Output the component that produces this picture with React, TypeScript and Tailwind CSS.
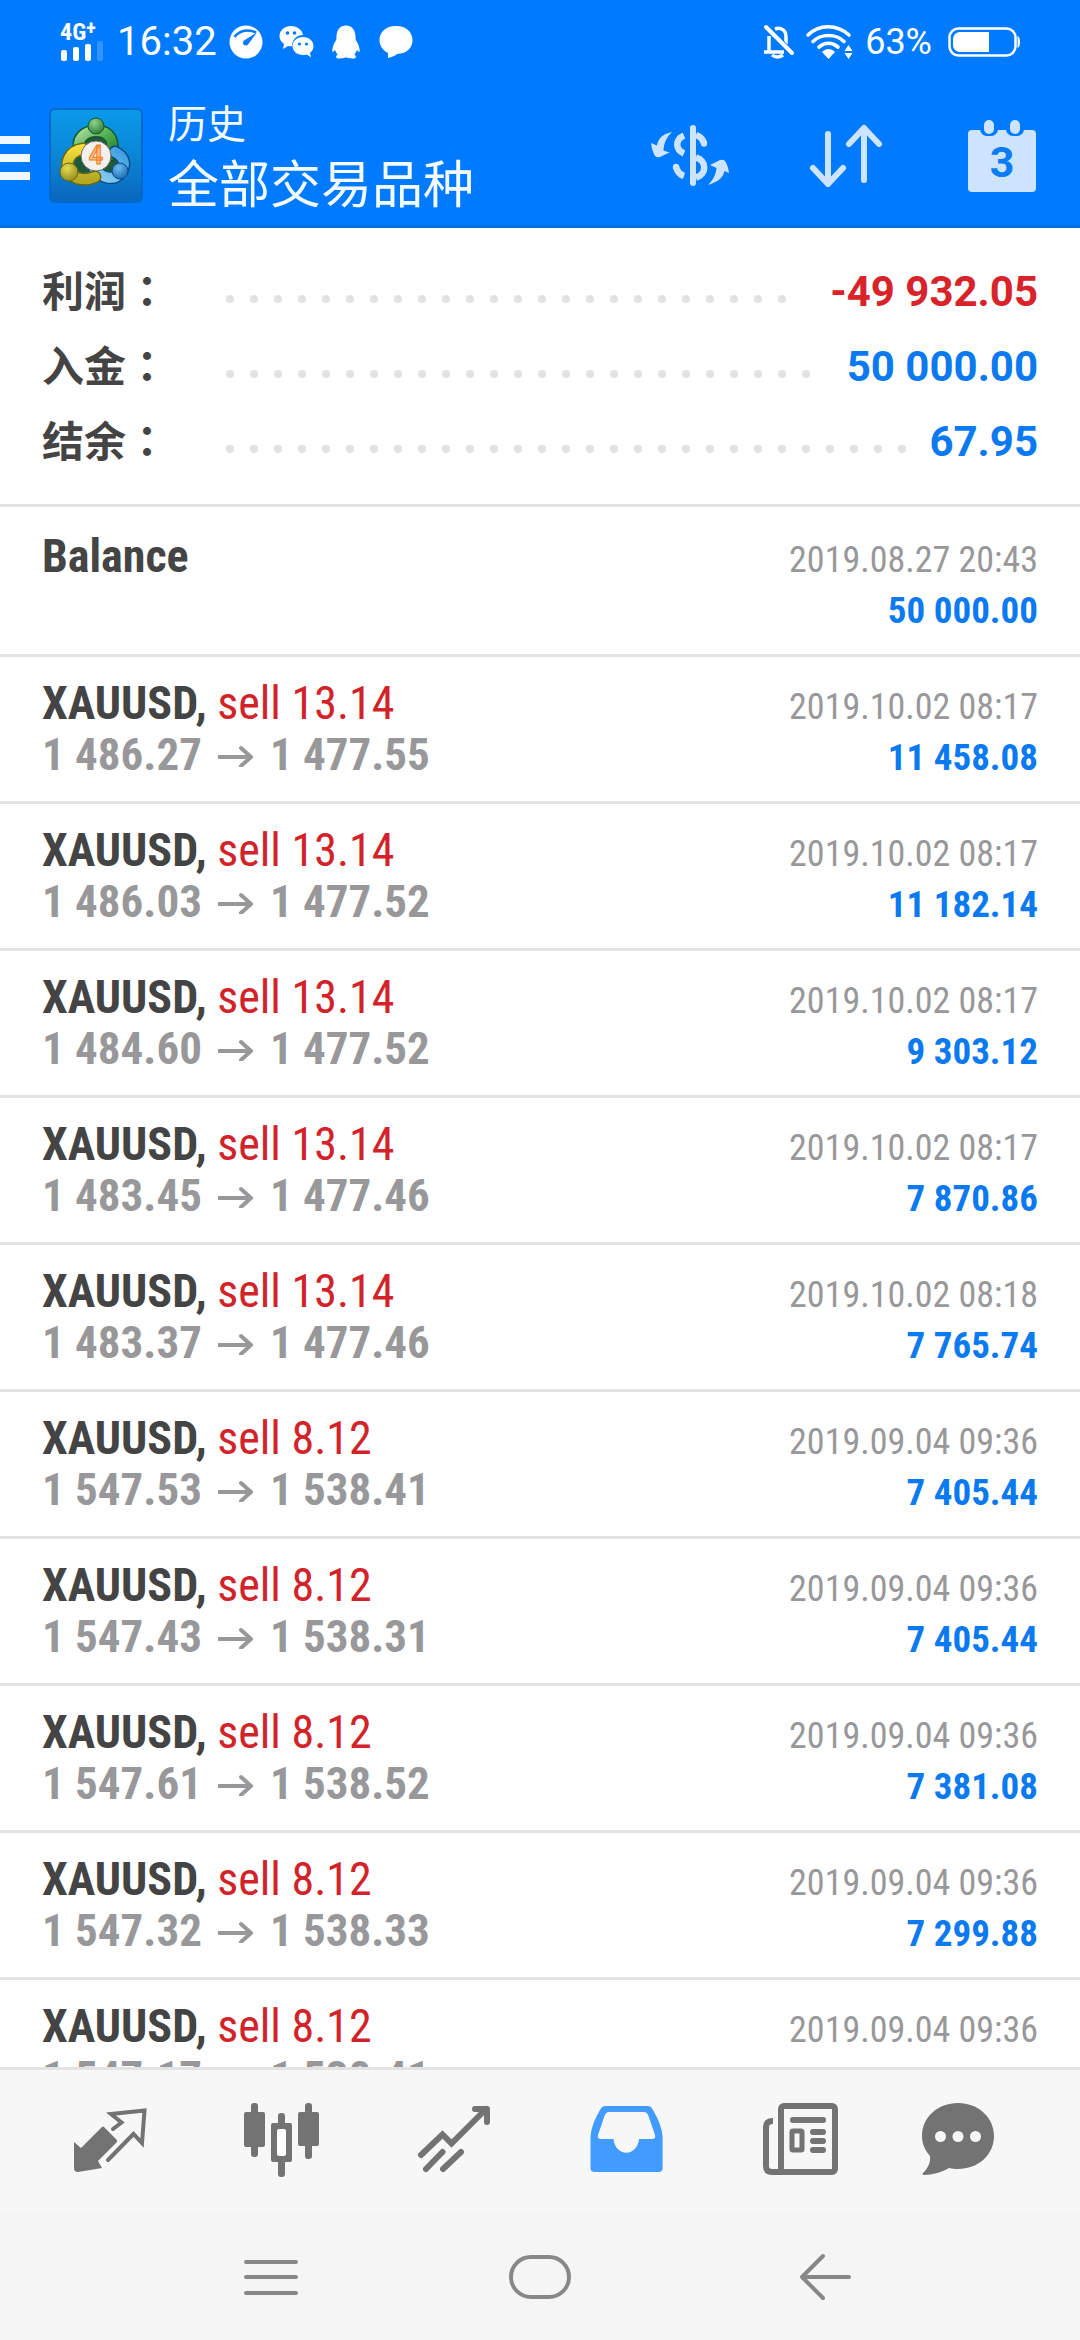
import type { ReactNode } from 'react'

type Deal = {
  volume: string
  open: string
  close: string
  time: string
  profit: string
}

const DEALS: Deal[] = [
  { volume: '13.14', open: '1 486.27', close: '1 477.55', time: '2019.10.02 08:17', profit: '11 458.08' },
  { volume: '13.14', open: '1 486.03', close: '1 477.52', time: '2019.10.02 08:17', profit: '11 182.14' },
  { volume: '13.14', open: '1 484.60', close: '1 477.52', time: '2019.10.02 08:17', profit: '9 303.12' },
  { volume: '13.14', open: '1 483.45', close: '1 477.46', time: '2019.10.02 08:17', profit: '7 870.86' },
  { volume: '13.14', open: '1 483.37', close: '1 477.46', time: '2019.10.02 08:18', profit: '7 765.74' },
  { volume: '8.12', open: '1 547.53', close: '1 538.41', time: '2019.09.04 09:36', profit: '7 405.44' },
  { volume: '8.12', open: '1 547.43', close: '1 538.31', time: '2019.09.04 09:36', profit: '7 405.44' },
  { volume: '8.12', open: '1 547.61', close: '1 538.52', time: '2019.09.04 09:36', profit: '7 381.08' },
  { volume: '8.12', open: '1 547.32', close: '1 538.33', time: '2019.09.04 09:36', profit: '7 299.88' },
  { volume: '8.12', open: '1 547.17', close: '1 538.41', time: '2019.09.04 09:36', profit: '7 113.12' },
]

const SUMMARY = [
  { label: '利润', value: '-49 932.05', tone: 'text-[#d8232a]' },
  { label: '入金', value: '50 000.00', tone: 'text-[#0b79f0]' },
  { label: '结余', value: '67.95', tone: 'text-[#0b79f0]' },
]

const DOTS = Array.from({ length: 34 }, (_, i) => i)

/* ── Status bar ─────────────────────────────────────────────────────────── */

function StatusBar() {
  return (
    <div className="flex h-[84px] items-center justify-between px-[60px] font-[Roboto,sans-serif] text-white">
      <div className="flex items-center">
        <div className="flex w-[57px] flex-col">
          <span className="flex font-['Roboto_Condensed',Roboto,sans-serif] text-[24px] font-bold leading-[18px]">
            4G<span className="text-[20px] leading-[10px]">+</span>
          </span>
          <svg className="h-5 w-11" viewBox="0 0 44 20" fill="currentColor">
            <rect x="1" y="9" width="6" height="11" rx="2" />
            <rect x="13" y="6" width="6" height="14" rx="2" />
            <rect x="25" y="3" width="6" height="17" rx="2" />
            <rect x="37" y="0" width="6" height="20" rx="2" opacity="0.2" />
          </svg>
        </div>
        <span className="text-[40px] leading-[48px]">16:32</span>
        <div className="flex items-center gap-[14px] pl-[11px]">
          <svg className="size-[36px]" viewBox="0 0 36 36">
            <circle cx="18" cy="18" r="16.5" fill="#fff" />
            <path d="M6.500 13C12 6 21 5 28 8.500" fill="none" stroke="#007aff" strokeWidth="2.500" />
            <path d="M29 8.500L16 16.500c-3 3 1 7 4 4z" fill="#007aff" />
          </svg>
          <svg className="size-[36px]" viewBox="0 0 36 36">
            <path d="M13 2C6.500 2 1.500 6.500 1.500 12c0 3 1.700 6 4.500 8l-1 5 5-3c1 .3 3 .4 4 .3A11 11 0 0 1 25 11C24 5.500 19 2 13 2z" fill="#fff" />
            <path d="M25 13c-6 0-10.500 4-10.500 9S19 31 25 31c1.500 0 2.500 0 4-.5l4 3-1-4.500c2-2 3.500-4 3.500-7 0-5-4.500-9-10.500-9z" fill="#fff" />
            <g fill="#007aff">
              <circle cx="9.500" cy="9" r="1.800" /><circle cx="16.500" cy="9" r="1.800" />
              <circle cx="21.500" cy="20" r="1.600" /><circle cx="28.500" cy="20" r="1.600" />
            </g>
          </svg>
          <svg className="size-[36px]" viewBox="0 0 36 36" fill="#fff">
            <path d="M18 1.500c-6 0-9 4.500-9.500 10.500L8.300 16C6 19 4 24 4.300 27.500c.4 1 2-.5 2.800-1.800.5 2 1.500 3.500 2.600 4.700-2 1-2 3.600 0 4 3 .4 6-.2 8.300-.8 2.300.6 5.300 1.200 8.300.8 2-.4 2-3 0-4 1.100-1.200 2.100-2.700 2.600-4.700.8 1.300 2.400 2.800 2.800 1.800.3-3.500-1.700-8.500-4-11.500l-.2-4C27 6 24 1.500 18 1.500z" />
          </svg>
          <svg className="size-[36px]" viewBox="0 0 36 36" fill="#fff">
            <path d="M18 2C8 2 1.500 8 1.500 16c0 6 3.500 10.500 8.500 13v5c5-1 8-3 9-4 10-.5 15.500-6 15.500-14C34.500 8 28 2 18 2z" />
          </svg>
        </div>
      </div>
      <div className="flex items-center">
        <svg className="size-[36px]" viewBox="0 0 36 36" fill="none" stroke="#fff" strokeWidth="3.500">
          <path d="M8 12v16M14 5c6-2 11 1 11 8v7M3 28h20" />
          <path d="M11 31q5 4 11 0" />
          <path d="M7 3l26 26" stroke="#007aff" strokeWidth="3" />
          <path d="M5 3l26 26" strokeWidth="4" strokeLinecap="round" />
        </svg>
        <svg className="ml-2 h-9 w-12" viewBox="0 0 48 36" fill="none" stroke="#fff" strokeWidth="3.600" strokeLinecap="round">
          <path d="M3 11C14 0 32 0 44 11M8 17.500c8-8 23-8 31 0M14 23c6-5 13-5 19 0" />
          <path d="M17 28c4-4 9-4 13 0l-6.500 7z" fill="#fff" stroke="none" />
          <path d="M43.500 21l4 6h-8zM43.500 35l-4-6h8z" fill="#fff" stroke="none" />
        </svg>
        <span className="ml-3 text-[36px] leading-[48px]">63%</span>
        <svg className="ml-4 h-8 w-[72px]" viewBox="0 0 72 32">
          <rect x="1.500" y="2.500" width="66" height="27" rx="9" fill="none" stroke="#fff" strokeWidth="2.500" />
          <path d="M12 6h29v20H12a7 7 0 0 1-7-7v-6a7 7 0 0 1 7-7z" fill="#fff" />
          <path d="M69.500 10q2.500 1 2.500 6t-2.500 6z" fill="#fff" />
        </svg>
      </div>
    </div>
  )
}

/* ── Toolbar ────────────────────────────────────────────────────────────── */

function AppLogo() {
  return (
    <svg className="size-24" viewBox="0 0 96 96">
      <defs>
        <linearGradient id="tile" x1="0" y1="0" x2="0" y2="1">
          <stop offset="0" stopColor="#0a9aea" />
          <stop offset="0.5" stopColor="#0a86d6" />
          <stop offset="1" stopColor="#0a66bc" />
        </linearGradient>
        <linearGradient id="green" x1="0" y1="0" x2="1" y2="1">
          <stop offset="0" stopColor="#a8db9a" />
          <stop offset="0.5" stopColor="#4fae52" />
          <stop offset="1" stopColor="#257f2f" />
        </linearGradient>
        <linearGradient id="gold" x1="0" y1="0" x2="0" y2="1">
          <stop offset="0" stopColor="#f2dc3c" />
          <stop offset="1" stopColor="#b5a824" />
        </linearGradient>
        <linearGradient id="sky" x1="1" y1="0" x2="0" y2="1">
          <stop offset="0" stopColor="#3d9fe0" />
          <stop offset="1" stopColor="#8fcff2" />
        </linearGradient>
        <radialGradient id="headGreen" cx="0.4" cy="0.3" r="0.8">
          <stop offset="0" stopColor="#8fd48c" />
          <stop offset="1" stopColor="#23742e" />
        </radialGradient>
        <radialGradient id="headGold" cx="0.4" cy="0.3" r="0.8">
          <stop offset="0" stopColor="#e6dc50" />
          <stop offset="1" stopColor="#8a8418" />
        </radialGradient>
        <radialGradient id="headSky" cx="0.4" cy="0.3" r="0.8">
          <stop offset="0" stopColor="#6dbcf0" />
          <stop offset="1" stopColor="#1464b0" />
        </radialGradient>
      </defs>
      <rect x="2" y="2" width="92" height="93" rx="5" fill="url(#tile)" stroke="#0668c8" strokeWidth="2" />
      <path d="M30 40l18-14 20 18 2 20-22 8-24-6z" fill="#1d5a3a" />
      <g fill="none" strokeLinecap="round">
        <path d="M33 44C27 32 37 24 48 24c14 0 19 10 15 24" stroke="#14582a" strokeWidth="13" />
        <path d="M33 44C27 32 37 24 48 24c14 0 19 10 15 24" stroke="url(#green)" strokeWidth="10" />
        <path d="M67 45c10 5 11 13 6 20-7 10-20 6-27-4" stroke="#0c4a85" strokeWidth="13" />
        <path d="M67 45c10 5 11 13 6 20-7 10-20 6-27-4" stroke="url(#sky)" strokeWidth="10" />
        <path d="M35 42C21 44 17 56 21 64c5 9 17 10 26 6" stroke="#6b6a10" strokeWidth="13" />
        <path d="M35 42C21 44 17 56 21 64c5 9 17 10 26 6" stroke="url(#gold)" strokeWidth="10" />
      </g>
      <circle cx="48" cy="19" r="8" fill="url(#headGreen)" stroke="#14582a" />
      <circle cx="21" cy="65" r="9" fill="url(#headGold)" stroke="#6b6a10" />
      <circle cx="72" cy="64" r="8" fill="url(#headSky)" stroke="#0c4a85" />
      <circle cx="48" cy="49" r="15" fill="#f3f1f0" stroke="#6b6a5a" />
      <text x="48" y="57" textAnchor="middle" fontFamily="Roboto, sans-serif" fontWeight="700" fontSize="25" fill="#fbc08a" stroke="#f07d20">4</text>
    </svg>
  )
}

function Toolbar() {
  return (
    <div className="flex h-[141px] items-center pr-[38px]">
      <button aria-label="菜单" className="flex flex-col gap-[10px] pt-[6px]">
        <span className="h-2 w-[30px] bg-[#f0f9ff]" />
        <span className="h-2 w-[30px] bg-[#f0f9ff]" />
        <span className="h-2 w-[30px] bg-[#f0f9ff]" />
      </button>
      <div className="pl-[18px]">
        <AppLogo />
      </div>
      <div className="flex flex-1 flex-col pb-[2px] pl-6 font-['Noto_Sans_CJK_SC',sans-serif] text-[#f4fbff]">
        <span className="text-[39px] leading-[54px]">历史</span>
        <h1 className="text-[51px] leading-[66px]">全部交易品种</h1>
      </div>
      <div className="flex items-center gap-[76px]">
        <button aria-label="货币">
          <svg className="size-20" viewBox="0 0 80 80" fill="#cce4ff">
            <path d="M22 17C12 19 8 24 7 30.500L1 28q1 8 4 13 2 2 5 1l9.500-4.500-6-2C14 28 16 23 22 17z" />
            <path d="M58 70C70 66 73 62 74.500 56l4.500 2q-1-8-4-12-2-2-5-1l-10 5 6.500 3Q66 62 58 70z" />
            <rect x="40" y="10" width="6" height="61" rx="3" />
            <path d="M34 20.500c-9 4-9 14 0 18M26 52q2 7 8 9" fill="none" stroke="#cce4ff" strokeWidth="6.500" />
            <path d="M46 20q6 2 8 8M46 42.500c11 3 11 17 0 20" fill="none" stroke="#cce4ff" strokeWidth="6.500" />
            <circle cx="54" cy="28.500" r="3.200" />
            <circle cx="26" cy="52" r="3.200" />
          </svg>
        </button>
        <button aria-label="排序">
          <svg className="size-20" viewBox="0 0 80 80" fill="none" stroke="#cce4ff" strokeWidth="6" strokeLinecap="round" strokeLinejoin="round">
            <path d="M22 19v50M7 53l15 16 15-16" />
            <path d="M58 65V13M43 29l15-16 15 16" />
          </svg>
        </button>
        <button aria-label="日期">
          <svg className="size-20" viewBox="0 0 80 80">
            <rect x="6" y="15" width="68" height="62" rx="4" fill="#cce4ff" />
            <rect x="18" y="2" width="18" height="19" rx="7" fill="#007aff" />
            <rect x="44" y="2" width="18" height="19" rx="7" fill="#007aff" />
            <rect x="22" y="5" width="10" height="14" rx="5" fill="#cce4ff" />
            <rect x="48" y="5" width="10" height="14" rx="5" fill="#cce4ff" />
            <text x="40" y="62" textAnchor="middle" fontFamily="Roboto, sans-serif" fontWeight="700" fontSize="43" fill="#0a7cf5">3</text>
          </svg>
        </button>
      </div>
    </div>
  )
}

/* ── Account summary ────────────────────────────────────────────────────── */

function Summary() {
  return (
    <dl className="border-b-[3px] border-[#e3e3e3] px-[42px] pb-[25px] pt-[26px]">
      {SUMMARY.map(row => (
        <div key={row.label} className="flex h-[75px] items-center text-[42px] leading-[75px]">
          <dt className="h-[82px] w-[184px] font-['Noto_Sans_CJK_SC',sans-serif] font-bold text-[#444]">
            {row.label}
            <span className="font-['Noto_Sans_CJK_TC',sans-serif]">：</span>
          </dt>
          <div aria-hidden className="mt-[14px] flex h-2 flex-1 flex-wrap gap-x-4 gap-y-2 overflow-hidden">
            {DOTS.map(i => (
              <span key={i} className="size-2 rounded-full bg-[#e2e2e2]" />
            ))}
          </div>
          <dd className={`pl-[22px] font-[Roboto,sans-serif] font-bold ${row.tone}`}>{row.value}</dd>
        </div>
      ))}
    </dl>
  )
}

/* ── History rows ───────────────────────────────────────────────────────── */

type RowProps = {
  title: ReactNode
  detail?: ReactNode
  time: string
  amount: string
  className: string
}

function HistoryRow({ title, detail, time, amount, className }: RowProps) {
  return (
    <li className={`border-b-[3px] border-[#e3e3e3] px-[42px] leading-[51px] ${className}`}>
      <div className="flex h-[51px] items-baseline justify-between">
        <span className="text-[46px]">{title}</span>
        <span className="text-[36px] text-[#98989a]">{time}</span>
      </div>
      <div className="flex h-[51px] items-baseline text-[45px] font-bold">
        {detail && <span className="flex items-center text-[#98989a]">{detail}</span>}
        <span className="ml-auto">
          <span className="text-[37px] text-[#0b79f0]">{amount}</span>
        </span>
      </div>
    </li>
  )
}

function DealRow({ deal }: { deal: Deal }) {
  return (
    <HistoryRow
      className="h-[147px] pt-[21px]"
      title={<><b className="text-[#444]">XAUUSD,</b> <span className="text-[#d2232a]">sell {deal.volume}</span></>}
      detail={
        <>
          {deal.open}
          <svg className="mx-4 h-6 w-9" viewBox="0 0 36 24" fill="none" stroke="currentColor" strokeWidth="4" strokeLinecap="round" strokeLinejoin="round">
            <path d="M1 14h32M23 5l10 9-10 9" />
          </svg>
          {deal.close}
        </>
      }
      time={deal.time}
      amount={deal.profit}
    />
  )
}

/* ── Bottom tabs ────────────────────────────────────────────────────────── */

const TABS = [
  {
    label: '行情',
    icon: (
      <>
        <path d="M12 48l7 6 21-21q1-1 2 0l12 12q2 2 0 4L36 67l4 7-24 4q-4 0-4-4z" fill="currentColor" />
        <path d="M51 35l8.500-6.500L49 20l33.500-3.500L80 49l-8.500-9L46 66" fill="none" stroke="currentColor" strokeWidth="4" strokeLinecap="round" />
      </>
    ),
  },
  {
    label: '图表',
    icon: (
      <g fill="currentColor">
        <rect x="10" y="18" width="21" height="35" rx="2" />
        <rect x="17" y="9" width="7" height="54" rx="3" />
        <rect x="37" y="29" width="21" height="39" rx="2" />
        <rect x="44" y="19" width="7" height="64" rx="3" />
        <rect x="43" y="35" width="9" height="27" rx="2" fill="#fff" />
        <rect x="64" y="18" width="21" height="34" rx="2" />
        <rect x="71" y="9" width="7" height="56" rx="3" />
      </g>
    ),
  },
  {
    label: '交易',
    icon: (
      <g fill="none" stroke="currentColor" strokeWidth="6" strokeLinecap="round" strokeLinejoin="round">
        <path d="M15 61l21.500-20.500 9 9L80 15" strokeLinejoin="miter" />
        <path d="M69 15h12v13" />
        <path d="M36.500 58L20 75M55 58L37 75" />
      </g>
    ),
  },
  {
    label: '历史',
    active: true,
    icon: (
      <>
        <path d="M27 12h43q3 0 5 4 9 15 9.600 27v31q0 4-4 4H17q-4.500 0-4.500-4V43Q13 31 22 16q2-4 5-4z" fill="currentColor" />
        <path d="M31 18h35q3 0 4.500 4L77 41q1 4-3 4H61a12.800 15 0 0 1-25.500 0H23q-4 0-3-4l6.500-19q1.500-4 4.500-4z" fill="#f7f7f7" />
      </>
    ),
  },
  {
    label: '新闻',
    icon: (
      <g fill="none" stroke="currentColor" strokeWidth="6">
        <rect x="31" y="12" width="54" height="66" rx="3" />
        <path d="M23 27q-7 0-7 6v39q0 6 6 6h12" />
        <path d="M43 26h30M63 38h10M63 47h10M63 56h10" strokeLinecap="round" />
        <rect x="42" y="37" width="10" height="19" rx="1" strokeWidth="5" />
      </g>
    ),
  },
  {
    label: '消息',
    icon: (
      <>
        <path d="M36 9C16 9 0 23 0 42c0 8 3 14 8 20 1 7-3 13-7 17-1 1 0 2 1 2 9 0 18-3 25-7 3 .8 6 1 9 1 20 0 36-14 36-33S56 9 36 9z" fill="currentColor" />
        <g fill="#f7f7f7">
          <circle cx="18.500" cy="42.500" r="5.500" />
          <circle cx="36" cy="42.500" r="5.500" />
          <circle cx="53.500" cy="42.500" r="5.500" />
        </g>
      </>
    ),
  },
]

function TabBar() {
  return (
    <nav className="flex h-[147px] shrink-0 items-center border-t-[3px] border-[#e3e3e3] bg-[#f7f7f7] px-6">
      {TABS.map(tab => (
        <button
          key={tab.label}
          aria-label={tab.label}
          className={`flex flex-1 justify-center ${tab.active ? 'text-[#429cff]' : 'text-[#737373]'}`}
        >
          <svg className="size-24" viewBox="0 0 96 96">{tab.icon}</svg>
        </button>
      ))}
    </nav>
  )
}

function SystemNav() {
  return (
    <div className="flex h-[126px] shrink-0 items-center bg-[#f5f5f5] px-[135px]">
      <button aria-label="最近" className="flex flex-1 justify-center">
        <svg className="size-24" viewBox="0 0 96 96" stroke="#888" strokeWidth="4" strokeLinecap="round">
          <path d="M24 33h50M24 48h50M24 64h50" />
        </svg>
      </button>
      <button aria-label="主页" className="flex flex-1 justify-center">
        <svg className="size-24" viewBox="0 0 96 96" fill="none" stroke="#888" strokeWidth="4">
          <rect x="19" y="28" width="58" height="40" rx="20" />
        </svg>
      </button>
      <button aria-label="返回" className="flex flex-1 justify-center">
        <svg className="size-24" viewBox="0 0 96 96" fill="none" stroke="#888" strokeWidth="4" strokeLinecap="round" strokeLinejoin="round">
          <path d="M40 48h47M61 27L40 48l21 21" />
        </svg>
      </button>
    </div>
  )
}

export default function App() {
  return (
    <div className="flex h-screen flex-col overflow-hidden bg-white">
      <header className="shrink-0 border-b-[3px] border-[#0a6fe0] bg-[#007aff]">
        <StatusBar />
        <Toolbar />
      </header>
      <main className="min-h-0 flex-1 overflow-hidden">
        <Summary />
        <ul className="font-['Roboto_Condensed',Roboto,sans-serif]">
          <HistoryRow
            className="h-[150px] pt-6"
            title={<b className="text-[#444]">Balance</b>}
            time="2019.08.27 20:43"
            amount="50 000.00"
          />
          {DEALS.map((deal, i) => <DealRow key={i} deal={deal} />)}
        </ul>
      </main>
      <TabBar />
      <SystemNav />
    </div>
  )
}
